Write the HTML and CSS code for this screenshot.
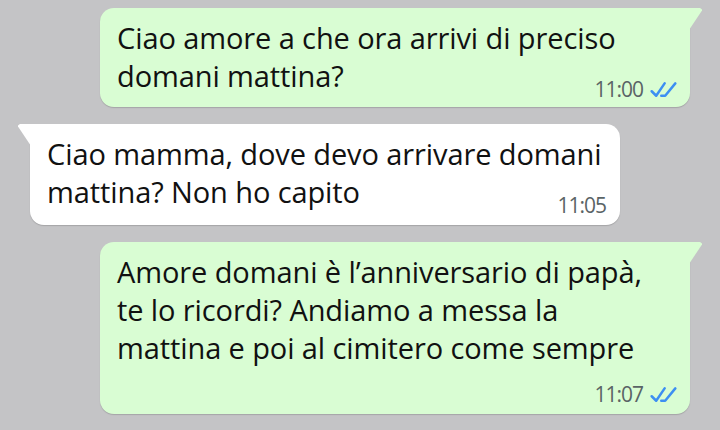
FILE: index.html
```html
<!DOCTYPE html>
<html lang="it">
<head>
<meta charset="utf-8">
<title>Chat</title>
<link rel="stylesheet" href="styles.css">
</head>
<body>
<div class="chat">

  <div class="bubble out">
    <p class="text">Ciao amore a che ora arrivi di preciso<br>domani mattina?</p>
    <div class="meta tuck">
      <span class="time">11:00</span>
      <svg class="ticks" viewBox="0 0 24 16" width="27" height="18"><path d="M1.5 10 L5.5 14 L13 3 M10 14 L13.5 14 L22.5 3" fill="none" stroke="#3d8ff2" stroke-width="2.2" stroke-linecap="round" stroke-linejoin="round"/></svg>
    </div>
  </div>

  <div class="bubble in">
    <p class="text">Ciao mamma, dove devo arrivare domani<br>mattina? Non ho capito</p>
    <div class="meta tuck">
      <span class="time">11:05</span>
    </div>
  </div>

  <div class="bubble out last">
    <p class="text">Amore domani è l’anniversario di papà,<br>te lo ricordi? Andiamo a messa la<br>mattina e poi al cimitero come sempre</p>
    <div class="meta">
      <span class="time">11:07</span>
      <svg class="ticks" viewBox="0 0 24 16" width="27" height="18"><path d="M1.5 10 L5.5 14 L13 3 M10 14 L13.5 14 L22.5 3" fill="none" stroke="#3d8ff2" stroke-width="2.2" stroke-linecap="round" stroke-linejoin="round"/></svg>
    </div>
  </div>

</div>
</body>
</html>
```

FILE: styles.css
```css
html, body {
    margin: 0;
    height: 100%;
}
body {
    background-color: #c4c4c6;
    font-family: "Open Sans", Roboto, sans-serif;
    color: #111111;
}
.chat {
    display: flex;
    flex-direction: column;
    gap: 17px;
    padding: 8px 30px 0 30px;
}
.bubble {
    position: relative;
    width: 590px;
    box-sizing: border-box;
    padding: 11px 13px 7px 17px;
    border-radius: 14px;
    box-shadow: 0 1px 1px rgba(0,0,0,0.16);
}
.bubble.out {
    align-self: flex-end;
    background-color: #d9fdd3;
    border-top-right-radius: 0;
}
.bubble.in {
    align-self: flex-start;
    background-color: #ffffff;
    border-top-left-radius: 0;
    padding-right: 14px;
    padding-bottom: 9px;
}
.bubble.last {
    padding-bottom: 9px;
}
/* little tails at the top corners */
.bubble.out::after,
.bubble.in::after {
    content: "";
    position: absolute;
    top: 0;
    width: 13px;
    height: 22px;
}
.bubble.out::after {
    right: -12px;
    background-color: #d9fdd3;
    clip-path: polygon(0 0, 85% 0, 100% 7%, 100% 11%, 0 100%);
}
.bubble.in::after {
    left: -12px;
    background-color: #ffffff;
    clip-path: polygon(100% 0, 15% 0, 0 7%, 0 11%, 100% 100%);
}
.text {
    margin: 0;
    font-size: 29px;
    line-height: 38px;
    letter-spacing: -0.1px;
}
.meta {
    display: flex;
    justify-content: flex-end;
    align-items: center;
    gap: 7px;
    height: 22px;
    margin-top: 16px;
}
.meta.tuck {
    margin-top: -17px;
}
.time {
    font-size: 21px;
    color: #5a6466;
    letter-spacing: -1px;
}
.ticks {
    display: block;
}
```
